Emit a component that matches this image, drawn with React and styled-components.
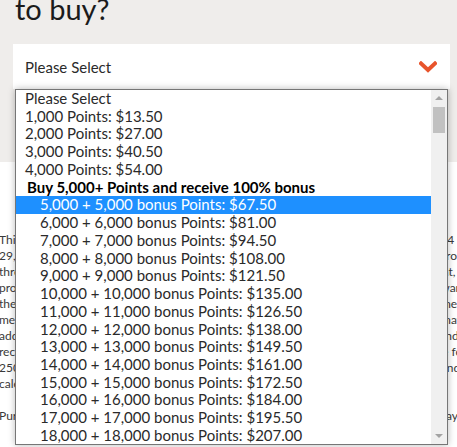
import React from 'react';
import styled, { createGlobalStyle } from 'styled-components';

const colors = {
  sand: '#efedeb',
  ink: '#1b1b1b',
  text: '#2a2a2a',
  orange: '#e8542c',
  highlight: '#1e90ff',
  border: '#767676',
  track: '#f0f0f0',
  thumb: '#c1c1c1',
  arrow: '#a3a3a3',
};

const GlobalStyle = createGlobalStyle`
  html, body {
    margin: 0;
    padding: 0;
    background: #fff;
    overflow: hidden;
  }
  body {
    font-family: Lato, "Open Sans", sans-serif;
  }
`;

const Page = styled.div`
  position: relative;
  width: 457px;
  height: 447px;
  overflow: hidden;
`;

const TopSection = styled.section`
  background: ${colors.sand};
  height: 162px;
  padding: 0 7px 0 13px;
  box-sizing: border-box;
`;

const Heading = styled.h2`
  margin: 0;
  padding: 0 0 0 2px;
  height: 44px;
  font-size: 29px;
  font-weight: 400;
  line-height: 1;
  color: ${colors.ink};
  transform: translateY(-6px);
`;

const SelectBox = styled.div`
  position: relative;
  display: flex;
  align-items: center;
  justify-content: space-between;
  height: 45px;
  padding: 0 13px 0 12px;
  background: #fff;
  font-size: 15px;
  color: ${colors.text};
`;

const Chevron = () => (
  <svg width="18" height="12" viewBox="0 0 18 12">
    <path d="M2 2.5 L9 9 L16 2.5" fill="none" stroke={colors.orange} strokeWidth="4" strokeLinecap="square" />
  </svg>
);

const Dropdown = styled.div`
  position: absolute;
  top: 89px;
  left: 15px;
  width: 433px;
  height: 356px;
  box-sizing: border-box;
  display: flex;
  background: #fff;
  border: 1px solid ${colors.border};
  box-shadow: 0 0 7px rgba(0, 0, 0, 0.28);
  z-index: 2;
`;

const OptionList = styled.ul`
  flex: 1;
  margin: 0;
  padding: 0;
  list-style: none;
  overflow: hidden;
  font-size: 15px;
`;

const Option = styled.li`
  height: 17.74px;
  line-height: 17.74px;
  white-space: nowrap;
  padding-left: ${(p) => (p.$nested ? 24 : 9)}px;
  color: ${(p) => (p.$selected ? '#fff' : colors.text)};
  background: ${(p) => (p.$selected ? colors.highlight : 'transparent')};
`;

const GroupLabel = styled.li`
  height: 17.74px;
  line-height: 17.74px;
  white-space: nowrap;
  padding-left: 11px;
  font-weight: 700;
  color: #000;
`;

const Scrollbar = styled.div`
  width: 16px;
  display: flex;
  flex-direction: column;
  align-items: center;
  background: ${colors.track};
`;

const ScrollArrow = styled.div`
  height: 16px;
  width: 16px;
  display: flex;
  align-items: center;
  justify-content: center;
  &::before {
    content: '';
    border-left: 4px solid transparent;
    border-right: 4px solid transparent;
    ${(p) => (p.$down ? 'border-top' : 'border-bottom')}: 4px solid ${colors.arrow};
  }
`;

const Track = styled.div`
  flex: 1;
  width: 100%;
  padding: 1px 2px 0;
  box-sizing: border-box;
`;

const Thumb = styled.div`
  height: 26px;
  background: ${colors.thumb};
`;

const Terms = styled.p`
  margin: 70px 0 0 -1px;
  font-size: 12px;
  line-height: 16px;
  color: #3a3a3a;
  white-space: nowrap;
`;

const termLines = [
  'This promotion is valid for purchases made from March 1, 2024 through April 29, 2024 at 11:59 p.m. Eastern, subject to the terms in',
  '29, 2024. Purchased points are not eligible for elite status, do not count toward any promotions and will be credited in points',
  'three to five business days after the purchase is made for points to post to the account, which will be credited to the account first,',
  'promotional bonus points. Points purchased are non-refundable and do not count toward the annual limit for the purchase of points per produ',
  'the member. A maximum of 150,000 points may be purchased per calendar year per member, including the bonus points as stated by the member',
  'members who buy points as a gift for another member. Maximum of 150,000 points may be purchased per account, the transfer fee for a good',
  'additionally in bonus points. Transaction fees for this promotion are non-refundable and points will be added only for the account product',
  'recent purchases may not be counted in time to receive the bonus and are not eligible for the purchase limit of points in the account of their',
  '250,000 points, including the bonus, may be credited per account per calendar year, and the bonus points are credited within the same na',
  'calendar year.',
  '',
  'Purchased points cannot be transferred and are subject to the program rules which may change from time to time at the discretion of the new',
];

const basePoints = [
  ['1,000', '$13.50'],
  ['2,000', '$27.00'],
  ['3,000', '$40.50'],
  ['4,000', '$54.00'],
];

// 13.50 per thousand up to 10,000, then 11.50 per thousand
const bonusPoints = Array.from({ length: 20 }, (_, i) => {
  const n = 5 + i;
  const rate = n <= 10 ? 13.5 : 11.5;
  return { label: `${n},000`, price: `$${(n * rate).toFixed(2)}` };
});

function App() {
  return (
    <Page>
      <GlobalStyle />
      <TopSection>
        <Heading>to buy?</Heading>
        <SelectBox>
          <span>Please Select</span>
          <Chevron />
        </SelectBox>
      </TopSection>

      <Terms>
        {termLines.map((line, i) => (
          <React.Fragment key={i}>
            {line}
            <br />
          </React.Fragment>
        ))}
      </Terms>

      <Dropdown>
        <OptionList>
          <Option>Please Select</Option>
          {basePoints.map(([pts, price]) => (
            <Option key={pts}>{pts} Points: {price}</Option>
          ))}
          <GroupLabel>Buy 5,000+ Points and receive 100% bonus</GroupLabel>
          {bonusPoints.map((b, i) => (
            <Option key={b.label} $nested $selected={i === 0}>
              {b.label} + {b.label} bonus Points: {b.price}
            </Option>
          ))}
        </OptionList>
        <Scrollbar>
          <ScrollArrow />
          <Track>
            <Thumb />
          </Track>
          <ScrollArrow $down />
        </Scrollbar>
      </Dropdown>
    </Page>
  );
}

export default App;
